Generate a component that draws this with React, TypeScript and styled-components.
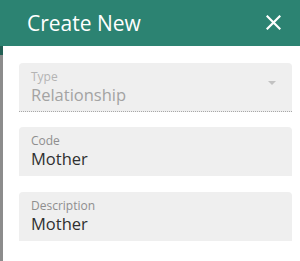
import styled, { createGlobalStyle } from 'styled-components'

const GlobalStyle = createGlobalStyle`
  html, body {
    margin: 0;
    padding: 0;
    background: #ffffff;
  }
  body {
    font-family: 'Open Sans', 'Noto Sans', sans-serif;
  }
`

const Dialog = styled.div`
  width: 300px;
  height: 261px;
  display: flex;
  flex-direction: column;
  overflow: hidden;
  background: #ffffff;
`

const Header = styled.div`
  height: 46px;
  flex-shrink: 0;
  background: #2c8372;
  display: flex;
  align-items: center;
  justify-content: space-between;
  padding: 0 19px 0 27px;
  box-sizing: border-box;
`

const Title = styled.h1`
  margin: 0;
  font-size: 21px;
  font-weight: 400;
  color: #ffffff;
  line-height: 28px;
  margin-top: -1px;
`

const CloseButton = styled.button`
  border: 0;
  background: transparent;
  padding: 0;
  width: 16px;
  height: 16px;
  display: flex;
  align-items: center;
  justify-content: center;
  cursor: pointer;
  margin-top: -1px;
`

const Body = styled.div`
  flex: 1;
  display: flex;
`

const Edge = styled.div`
  width: 3px;
  flex-shrink: 0;
  background: linear-gradient(#235f54 0 9px, #8c8c8c 9px);
`

const Form = styled.div`
  flex: 1;
  display: flex;
  flex-direction: column;
  gap: 16px;
  padding: 17px 8px 0 16px;
`

const Field = styled.div<{ $disabled?: boolean }>`
  position: relative;
  height: 49px;
  box-sizing: border-box;
  background: #efefef;
  border-radius: 4px 4px 0 0;
  padding: 6px 12px 0 12px;
  border-bottom: ${(p) => (p.$disabled ? '1px dotted #a8a8a8' : 'none')};
  margin-bottom: ${(p) => (p.$disabled ? '-1px' : '0')};
`

const Label = styled.div<{ $disabled?: boolean }>`
  font-size: 12px;
  line-height: 16px;
  color: ${(p) => (p.$disabled ? '#b4b4b4' : '#8e8e8e')};
`

const Value = styled.div<{ $disabled?: boolean }>`
  font-size: 16.5px;
  line-height: 20px;
  color: ${(p) => (p.$disabled ? '#a3a3a3' : '#2f2f2f')};
`

const Arrow = styled.div`
  position: absolute;
  right: 16px;
  top: 18px;
  width: 0;
  height: 0;
  border-left: 4px solid transparent;
  border-right: 4px solid transparent;
  border-top: 4px solid #c2c2c2;
`

export default function App() {
  return (
    <>
      <GlobalStyle />
      <Dialog>
        <Header>
          <Title>Create New</Title>
          <CloseButton aria-label="Close">
            <svg width="15" height="15" viewBox="0 0 15 15">
              <path d="M1.5 1.5 L13.5 13.5 M13.5 1.5 L1.5 13.5" stroke="#ffffff" strokeWidth="2.2" strokeLinecap="square" />
            </svg>
          </CloseButton>
        </Header>
        <Body>
          <Edge />
          <Form>
            <Field $disabled>
              <Label $disabled>Type</Label>
              <Value $disabled>Relationship</Value>
              <Arrow />
            </Field>
            <Field>
              <Label>Code</Label>
              <Value>Mother</Value>
            </Field>
            <Field>
              <Label>Description</Label>
              <Value>Mother</Value>
            </Field>
          </Form>
        </Body>
      </Dialog>
    </>
  )
}
